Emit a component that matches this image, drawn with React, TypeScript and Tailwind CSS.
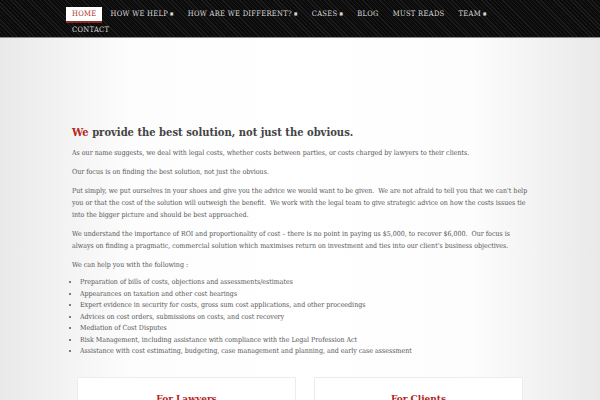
const navItems = [
  { label: "HOME", active: true },
  { label: "HOW WE HELP", drop: true },
  { label: "HOW ARE WE DIFFERENT?", drop: true },
  { label: "CASES", drop: true },
  { label: "BLOG" },
  { label: "MUST READS" },
  { label: "TEAM", drop: true },
  { label: "CONTACT" },
];

const services = [
  "Preparation of bills of costs, objections and assessments/estimates",
  "Appearances on taxation and other cost hearings",
  "Expert evidence in security for costs, gross sum cost applications, and other proceedings",
  "Advices on cost orders, submissions on costs, and cost recovery",
  "Mediation of Cost Disputes",
  "Risk Management, including assistance with compliance with the Legal Profession Act",
  "Assistance with cost estimating, budgeting, case management and planning, and early case assessment",
];

export default function App() {
  return (
    <div className="h-[400px] w-[600px] overflow-hidden bg-[linear-gradient(90deg,#e9e9e9,#fdfdfd_22%,#fff_50%,#fdfdfd_78%,#e9e9e9)] font-['DejaVu_Serif',serif] [font-stretch:condensed]">
      <nav className="h-[38px] border-b border-[#8a8a8a] bg-[repeating-linear-gradient(45deg,#1c1c1c_0,#1c1c1c_1px,#0b0b0b_1px,#0b0b0b_3px)]">
        <ul className="flex flex-wrap pl-[66px] pr-[80px] pt-[7px]">
          {navItems.map((item) => (
            <li
              key={item.label}
              className={
                item.active
                  ? "mr-[2px] h-[16px] border-b-2 border-[#8e2a22] bg-white px-[6px] text-[7.5px] leading-[14px] tracking-[0.3px] text-[#b3352b]"
                  : "mr-[2px] h-[16px] px-[6px] text-[7.5px] leading-[14px] tracking-[0.3px] text-[#d8d8d8]"
              }
            >
              {item.label}
              {item.drop && <span className="ml-[2px] align-[1px] text-[4px]">■</span>}
            </li>
          ))}
        </ul>
      </nav>

      <main className="mx-auto w-[456px] pt-[87px] text-[7px] leading-[12px] text-[#555]">
        <h1 className="mb-[6px] text-[11.1px] font-bold leading-[16px] text-[#444]">
          <span className="text-[#b3261e]">We</span> provide the best solution, not just the obvious.
        </h1>
        <p className="mb-[7px]">
          As our name suggests, we deal with legal costs, whether costs between parties, or costs charged by lawyers to their clients.
        </p>
        <p className="mb-[7px]">Our focus is on finding the best solution, not just the obvious.</p>
        <p className="mb-[7px]">
          Put simply, we put ourselves in your shoes and give you the advice we would want to be given.&nbsp; We are not afraid to tell you that we can't help you or that the cost of the solution will outweigh the benefit.&nbsp; We work with the legal team to give strategic advice on how the costs issues tie into the bigger picture and should be best approached.
        </p>
        <p className="mb-[7px]">
          We understand the importance of ROI and proportionality of cost – there is no point in paying us $5,000, to recover $6,000.&nbsp; Our focus is always on finding a pragmatic, commercial solution which maximises return on investment and ties into our client's business objectives.
        </p>
        <p className="mb-[6px]">We can help you with the following :</p>
        <ul className="list-disc pl-[8px] leading-[11.5px]">
          {services.map((s) => (
            <li key={s}>{s}</li>
          ))}
        </ul>

        <div className="mt-[19px] flex justify-between px-[5px]">
          <div className="h-[60px] w-[219px] border border-[#ececec] bg-white pt-[15px] text-center">
            <h2 className="text-[10px] font-bold text-[#b3261e]">For Lawyers</h2>
          </div>
          <div className="h-[60px] w-[209px] border border-[#ececec] bg-white pt-[15px] text-center">
            <h2 className="text-[10px] font-bold text-[#b3261e]">For Clients</h2>
          </div>
        </div>
      </main>
    </div>
  );
}
